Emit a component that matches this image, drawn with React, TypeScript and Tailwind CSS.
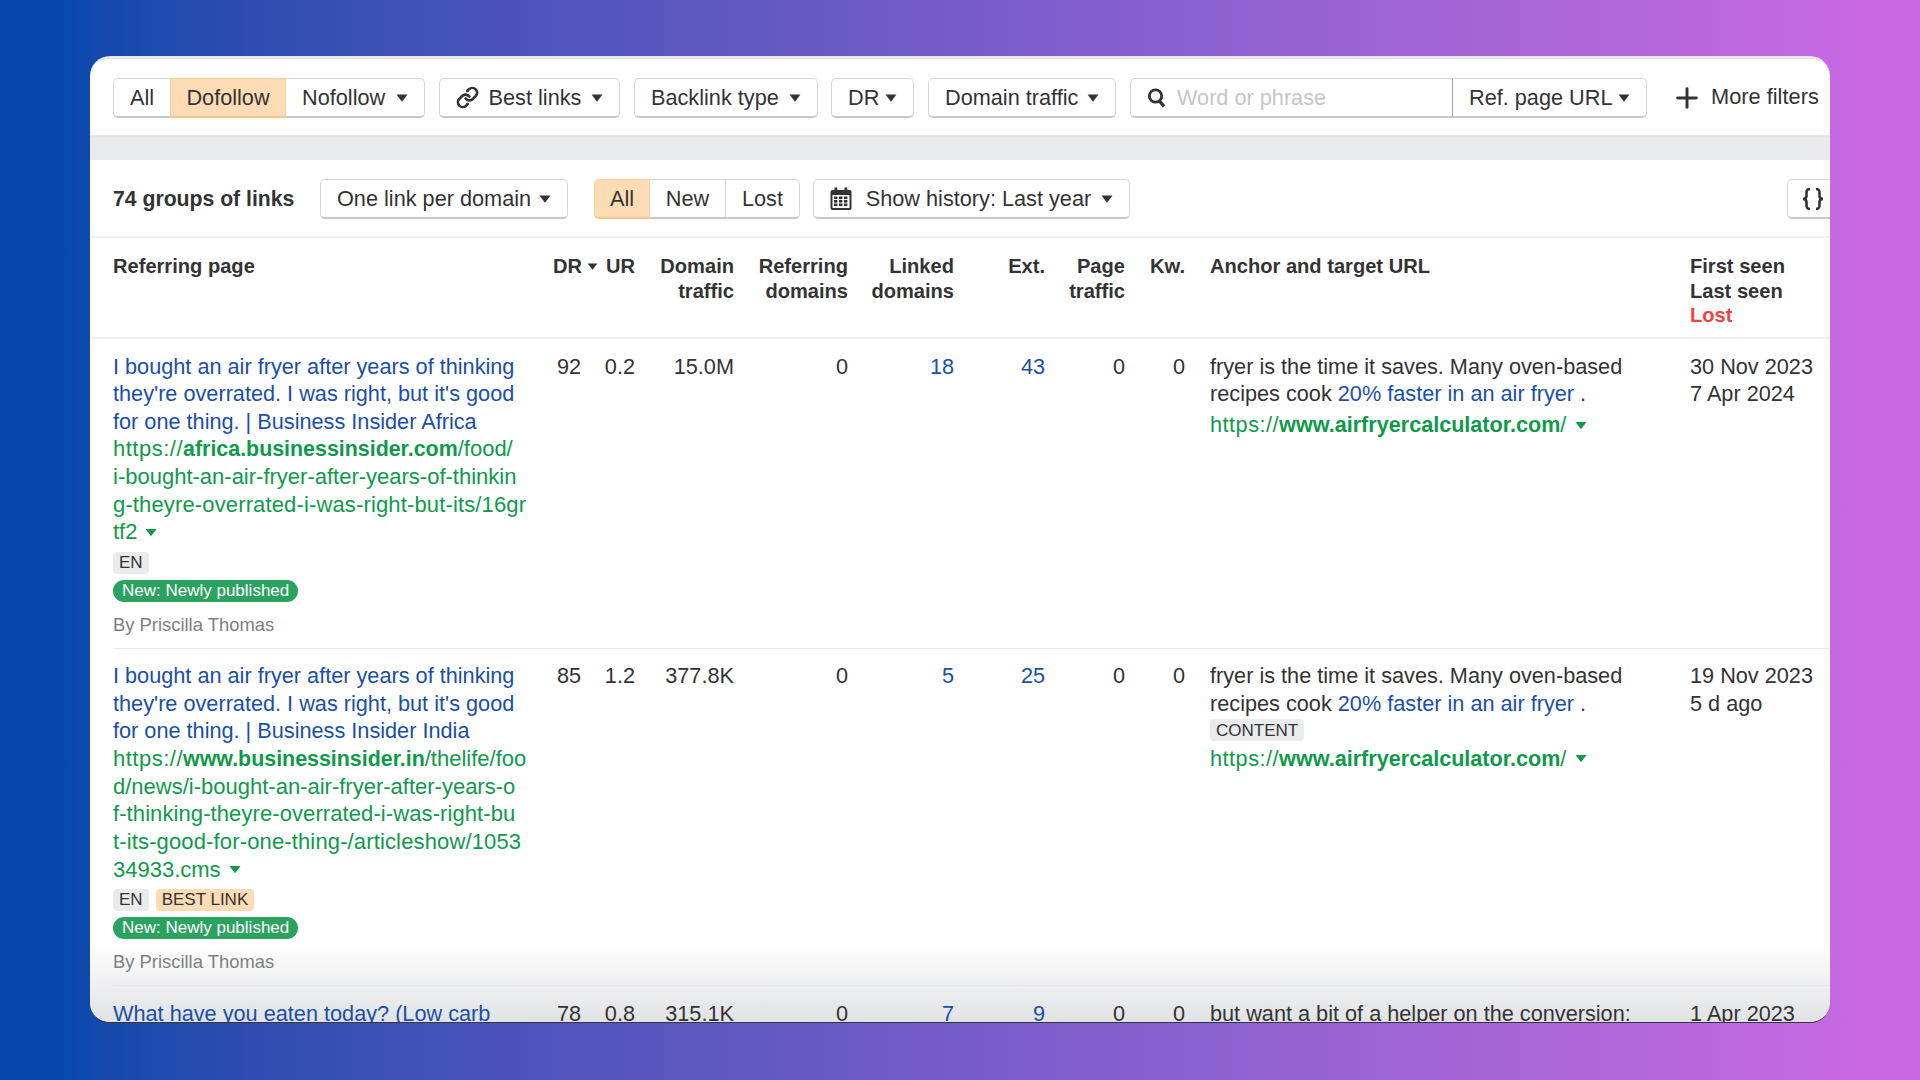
import { Link, Plus } from "lucide-react";

const Caret = ({ cls = "text-[#333]", w = 12, h = 8 }: { cls?: string; w?: number; h?: number }) => (
  <svg width={w} height={h} viewBox="0 0 12 8" className={`${cls} shrink-0`} fill="currentColor">
    <path d="M0.5 0.5h11L6 7.7z" />
  </svg>
);

const Search = () => (
  <svg width="20" height="20" viewBox="0 0 20 20" fill="none" stroke="#333" className="shrink-0">
    <circle cx="8.5" cy="8" r="6.2" strokeWidth="2.8" />
    <path d="M12.5 13l4.5 5.5" strokeWidth="3.4" />
  </svg>
);

const Calendar = () => (
  <svg width="22" height="24" viewBox="0 0 22 24" className="shrink-0">
    <rect x="0.5" y="3" width="21" height="20" rx="2" fill="#333" />
    <rect x="4.5" y="0.5" width="2.8" height="5" fill="#333" />
    <rect x="14.5" y="0.5" width="2.8" height="5" fill="#333" />
    <rect x="2.5" y="8" width="17" height="13" fill="#fff" />
    {[4.5, 9.5, 14.5].map((x) => [9.5, 13, 16.5].map((y) => <rect key={`${x}-${y}`} x={x - 0.5} y={y} width="3.4" height="2.6" fill="#333" />))}
  </svg>
);

const BracesIcon = () => (
  <svg width="22" height="22" viewBox="0 0 22 22" fill="none" stroke="#333" strokeWidth="2.6" className="shrink-0">
    <path d="M8 1C4.5 1 4.5 3 4.5 5V8C4.5 10 3.5 11 1 11C3.5 11 4.5 12 4.5 14V17C4.5 19 4.5 21 8 21" />
    <path d="M14 1C17.5 1 17.5 3 17.5 5V8C17.5 10 18.5 11 21 11C18.5 11 17.5 12 17.5 14V17C17.5 19 17.5 21 14 21" />
  </svg>
);

const btn = "h-10 shrink-0 flex items-center pt-[1px] border border-b-2 rounded-[5px] text-[21.7px] leading-none text-[#333] whitespace-nowrap";
const plain = "border-[#d3d6d8] border-b-[#c6c9cc]";
const active = "border-[#f6cfa0] border-b-[#f0c490] bg-[#fddcb5]";

const Dd = ({ label, w, icon }: { label: string; w: string; icon?: React.ReactNode }) => (
  <div className={`${btn} ${plain} ${w} justify-between px-4`}>
    {icon}
    <span>{label}</span>
    <Caret />
  </div>
);

const grid = "grid grid-cols-[416px_69px_37px_99px_114px_106px_91px_80px_60px_505px_1fr]";
const link = "text-[#1a4fa8]";
const green = "text-[#0f9a4b]";
const main = "text-[21.7px] leading-[27.65px] text-[#333]";

const Tag = ({ children, orange }: { children: React.ReactNode; orange?: boolean }) => (
  <span className={`inline-flex h-[22px] items-center rounded-[4px] px-[6px] text-[17px] leading-none text-[#333] ${orange ? "bg-[#fddcb5]" : "bg-[#eaebed]"}`}>
    {children}
  </span>
);

const Prefix = () => <span className="tracking-[0.5px]">https://</span>;

const HomePage = ({ lines }: { lines: React.ReactNode[] }) => (
  <div className={`${green} text-[22px] whitespace-nowrap`}>
    {lines.map((l, i) => (
      <div key={i} className="flex h-[27.65px] items-center gap-[8px]">
        <span>{l}</span>
        {i === lines.length - 1 && <Caret cls={green} w={12} h={9} />}
      </div>
    ))}
  </div>
);

const Num = ({ children, blue }: { children: React.ReactNode; blue?: boolean }) => (
  <div className={`text-right ${blue ? link : ""}`}>{children}</div>
);

const Target = () => (
  <div className={`${green} mt-[3.5px] flex h-[27.65px] items-center gap-[9px]`}>
    <span>
      <Prefix />
      <b className="text-[21.6px]">www.airfryercalculator.com</b>/
    </span>
    <Caret cls={green} w={12} h={9} />
  </div>
);

const Anchor = ({ content }: { content?: boolean }) => (
  <div className="pl-[25px] whitespace-nowrap">
    <div>fryer is the time it saves. Many oven-based</div>
    <div>
      recipes cook <span className={link}>20% faster in an air fryer</span> .
    </div>
    {content && (
      <div className="mt-[2px] flex">
        <Tag>CONTENT</Tag>
      </div>
    )}
    <Target />
  </div>
);

const Row = ({
  title,
  url,
  best,
  nums,
  dates,
  content,
}: {
  title: string[];
  url: React.ReactNode[];
  best?: boolean;
  nums: string[];
  dates: string[];
  content?: boolean;
}) => (
  <div className={`${grid} ${main} relative ml-[23px] border-b border-[#e8e9eb] pt-[13.6px] pb-[9.9px]`}>
    <div className="whitespace-nowrap">
      <div className={link}>
        {title.map((t) => (
          <div key={t}>{t}</div>
        ))}
      </div>
      <HomePage lines={url} />
      <div className="mt-[5.5px] flex gap-[7px]">
        <Tag>EN</Tag>
        {best && <Tag orange>BEST LINK</Tag>}
      </div>
      <div className="mt-[6px] flex">
        <span className="inline-flex h-[22px] items-center rounded-full bg-[#2ba25f] px-[9px] text-[17px] leading-none text-white">
          New: Newly published
        </span>
      </div>
      <div className="mt-[9px] text-[18.4px] leading-[27px] text-[#7c8085]">By Priscilla Thomas</div>
    </div>
    <div className="pr-[17px]">
      <Num>{nums[0]}</Num>
    </div>
    <Num>{nums[1]}</Num>
    <Num>{nums[2]}</Num>
    <Num>{nums[3]}</Num>
    <Num blue>{nums[4]}</Num>
    <Num blue>{nums[5]}</Num>
    <Num>{nums[6]}</Num>
    <Num>{nums[7]}</Num>
    <Anchor content={content} />
    <div className="whitespace-nowrap">
      {dates.map((d) => (
        <div key={d}>{d}</div>
      ))}
    </div>
  </div>
);

export default function App() {
  return (
    <div className="h-[1080px] w-[1920px] overflow-hidden bg-gradient-to-r from-[#0648ac] from-[3%] to-[#c869e3] to-[97%] pt-[56px] pl-[90px] font-['Liberation_Sans',Arial,sans-serif]">
      <div className="relative h-[967px] w-[1740px] overflow-hidden rounded-[20px] border-t-[3px] border-b border-t-[#e6e7e9] border-b-[#33343a] bg-white">
        <div className="pointer-events-none absolute inset-x-0 bottom-0 h-[80px] bg-gradient-to-b from-transparent to-[#dcdde0]/85" />
        <div className="flex h-[78px] items-center border-b-2 border-[#e4e5e7] pt-[1px] pl-[23px]">
          <div className="flex shrink-0">
            <div className={`${btn} ${plain} w-[57px] justify-center rounded-r-none border-r-0`}>All</div>
            <div className={`${btn} ${active} w-[116px] justify-center rounded-none`}>Dofollow</div>
            <div className={`${btn} ${plain} w-[139px] justify-between rounded-l-none border-l-0 px-4`}>
              <span>Nofollow</span>
              <Caret />
            </div>
          </div>
          <div className="ml-[14px] shrink-0">
            <Dd label="Best links" w="w-[181px]" icon={<Link size={23} strokeWidth={2.8} />} />
          </div>
          <div className="ml-[14px] shrink-0">
            <Dd label="Backlink type" w="w-[184px]" />
          </div>
          <div className="ml-[13px] shrink-0">
            <Dd label="DR" w="w-[83px]" />
          </div>
          <div className="ml-[14px] shrink-0">
            <Dd label="Domain traffic" w="w-[188px]" />
          </div>
          <div className="ml-[14px] flex shrink-0">
            <div className={`${btn} ${plain} w-[322px] gap-[10px] rounded-r-none border-r-0 px-4`}>
              <Search />
              <span className="text-[#c3c6c9]">Word or phrase</span>
            </div>
            <div className={`${btn} ${plain} w-[195px] justify-between rounded-l-none border-l-[#a0a3a6] px-4`}>
              <span>Ref. page URL</span>
              <Caret />
            </div>
          </div>
          <div className="ml-[24px] flex shrink-0 items-center gap-[8px] text-[21.8px] whitespace-nowrap text-[#333]">
            <Plus size={32} strokeWidth={2.2} />
            <span>More filters</span>
          </div>
        </div>
        <div className="h-[23px] bg-[#e9eaec]" />
        <div className="flex h-[78px] items-center border-b-2 border-[#eeeff0] pt-[2px] pl-[23px]">
          <span className="w-[207px] shrink-0 text-[21.2px] font-bold whitespace-nowrap text-[#333]">74 groups of links</span>
          <Dd label="One link per domain" w="w-[248px]" />
          <div className="ml-[26px] flex shrink-0">
            <div className={`${btn} ${active} w-[56px] justify-center rounded-r-none`}>All</div>
            <div className={`${btn} ${plain} w-[76px] justify-center rounded-none border-l-0`}>New</div>
            <div className={`${btn} ${plain} w-[74px] justify-center rounded-l-none border-l-0`}>Lost</div>
          </div>
          <div className="ml-[13px] shrink-0">
            <div className={`${btn} ${plain} w-[317px] justify-between px-4`}>
              <Calendar />
              <span className="ml-[4px]">Show history: Last year</span>
              <Caret />
            </div>
          </div>
          <div className="ml-[657px] shrink-0">
            <div className={`${btn} ${plain} w-[60px] pl-[14px]`}>
              <BracesIcon />
            </div>
          </div>
        </div>
        <div className={`${grid} h-[101px] border-b-2 border-[#eeeff0] pt-[16px] pl-[23px] text-[20.1px] leading-[24.5px] font-bold text-[#333]`}>
          <div>Referring page</div>
          <div className="flex h-[24.5px] items-center justify-end gap-[5px]">
            <span>DR</span>
            <Caret w={11} h={7} />
          </div>
          <div className="text-right">UR</div>
          <div className="text-right">
            Domain
            <br />
            traffic
          </div>
          <div className="text-right">
            Referring
            <br />
            domains
          </div>
          <div className="text-right">
            Linked
            <br />
            domains
          </div>
          <div className="text-right">Ext.</div>
          <div className="text-right">
            Page
            <br />
            traffic
          </div>
          <div className="text-right">Kw.</div>
          <div className="pl-[25px] whitespace-nowrap">Anchor and target URL</div>
          <div className="whitespace-nowrap">
            First seen
            <br />
            Last seen
            <br />
            <span className="text-[#f04343]">Lost</span>
          </div>
        </div>
        <Row
          title={["I bought an air fryer after years of thinking", "they're overrated. I was right, but it's good", "for one thing. | Business Insider Africa"]}
          url={[
            <>
              <Prefix />
              <b className="text-[21.4px]">africa.businessinsider.com</b>/food/
            </>,
            "i-bought-an-air-fryer-after-years-of-thinkin",
            <span className="tracking-[0.14px]">g-theyre-overrated-i-was-right-but-its/16gr</span>,
            "tf2",
          ]}
          nums={["92", "0.2", "15.0M", "0", "18", "43", "0", "0"]}
          dates={["30 Nov 2023", "7 Apr 2024"]}
        />
        <Row
          title={["I bought an air fryer after years of thinking", "they're overrated. I was right, but it's good", "for one thing. | Business Insider India"]}
          url={[
            <>
              <Prefix />
              <b className="text-[21.4px]">www.businessinsider.in</b>/thelife/foo
            </>,
            "d/news/i-bought-an-air-fryer-after-years-o",
            <span className="tracking-[0.09px]">f-thinking-theyre-overrated-i-was-right-bu</span>,
            <span className="tracking-[0.14px]">t-its-good-for-one-thing-/articleshow/1053</span>,
            "34933.cms",
          ]}
          best
          content
          nums={["85", "1.2", "377.8K", "0", "5", "25", "0", "0"]}
          dates={["19 Nov 2023", "5 d ago"]}
        />
        <div className={`${grid} ${main} relative pt-[14px] pl-[23px]`}>
          <div className={`${link} whitespace-nowrap`}>What have you eaten today? (Low carb</div>
          <div className="pr-[17px]">
            <Num>78</Num>
          </div>
          <Num>0.8</Num>
          <Num>315.1K</Num>
          <Num>0</Num>
          <Num blue>7</Num>
          <Num blue>9</Num>
          <Num>0</Num>
          <Num>0</Num>
          <div className="pl-[25px] whitespace-nowrap">but want a bit of a helper on the conversion:</div>
          <div className="whitespace-nowrap">1 Apr 2023</div>
        </div>
      </div>
    </div>
  );
}
